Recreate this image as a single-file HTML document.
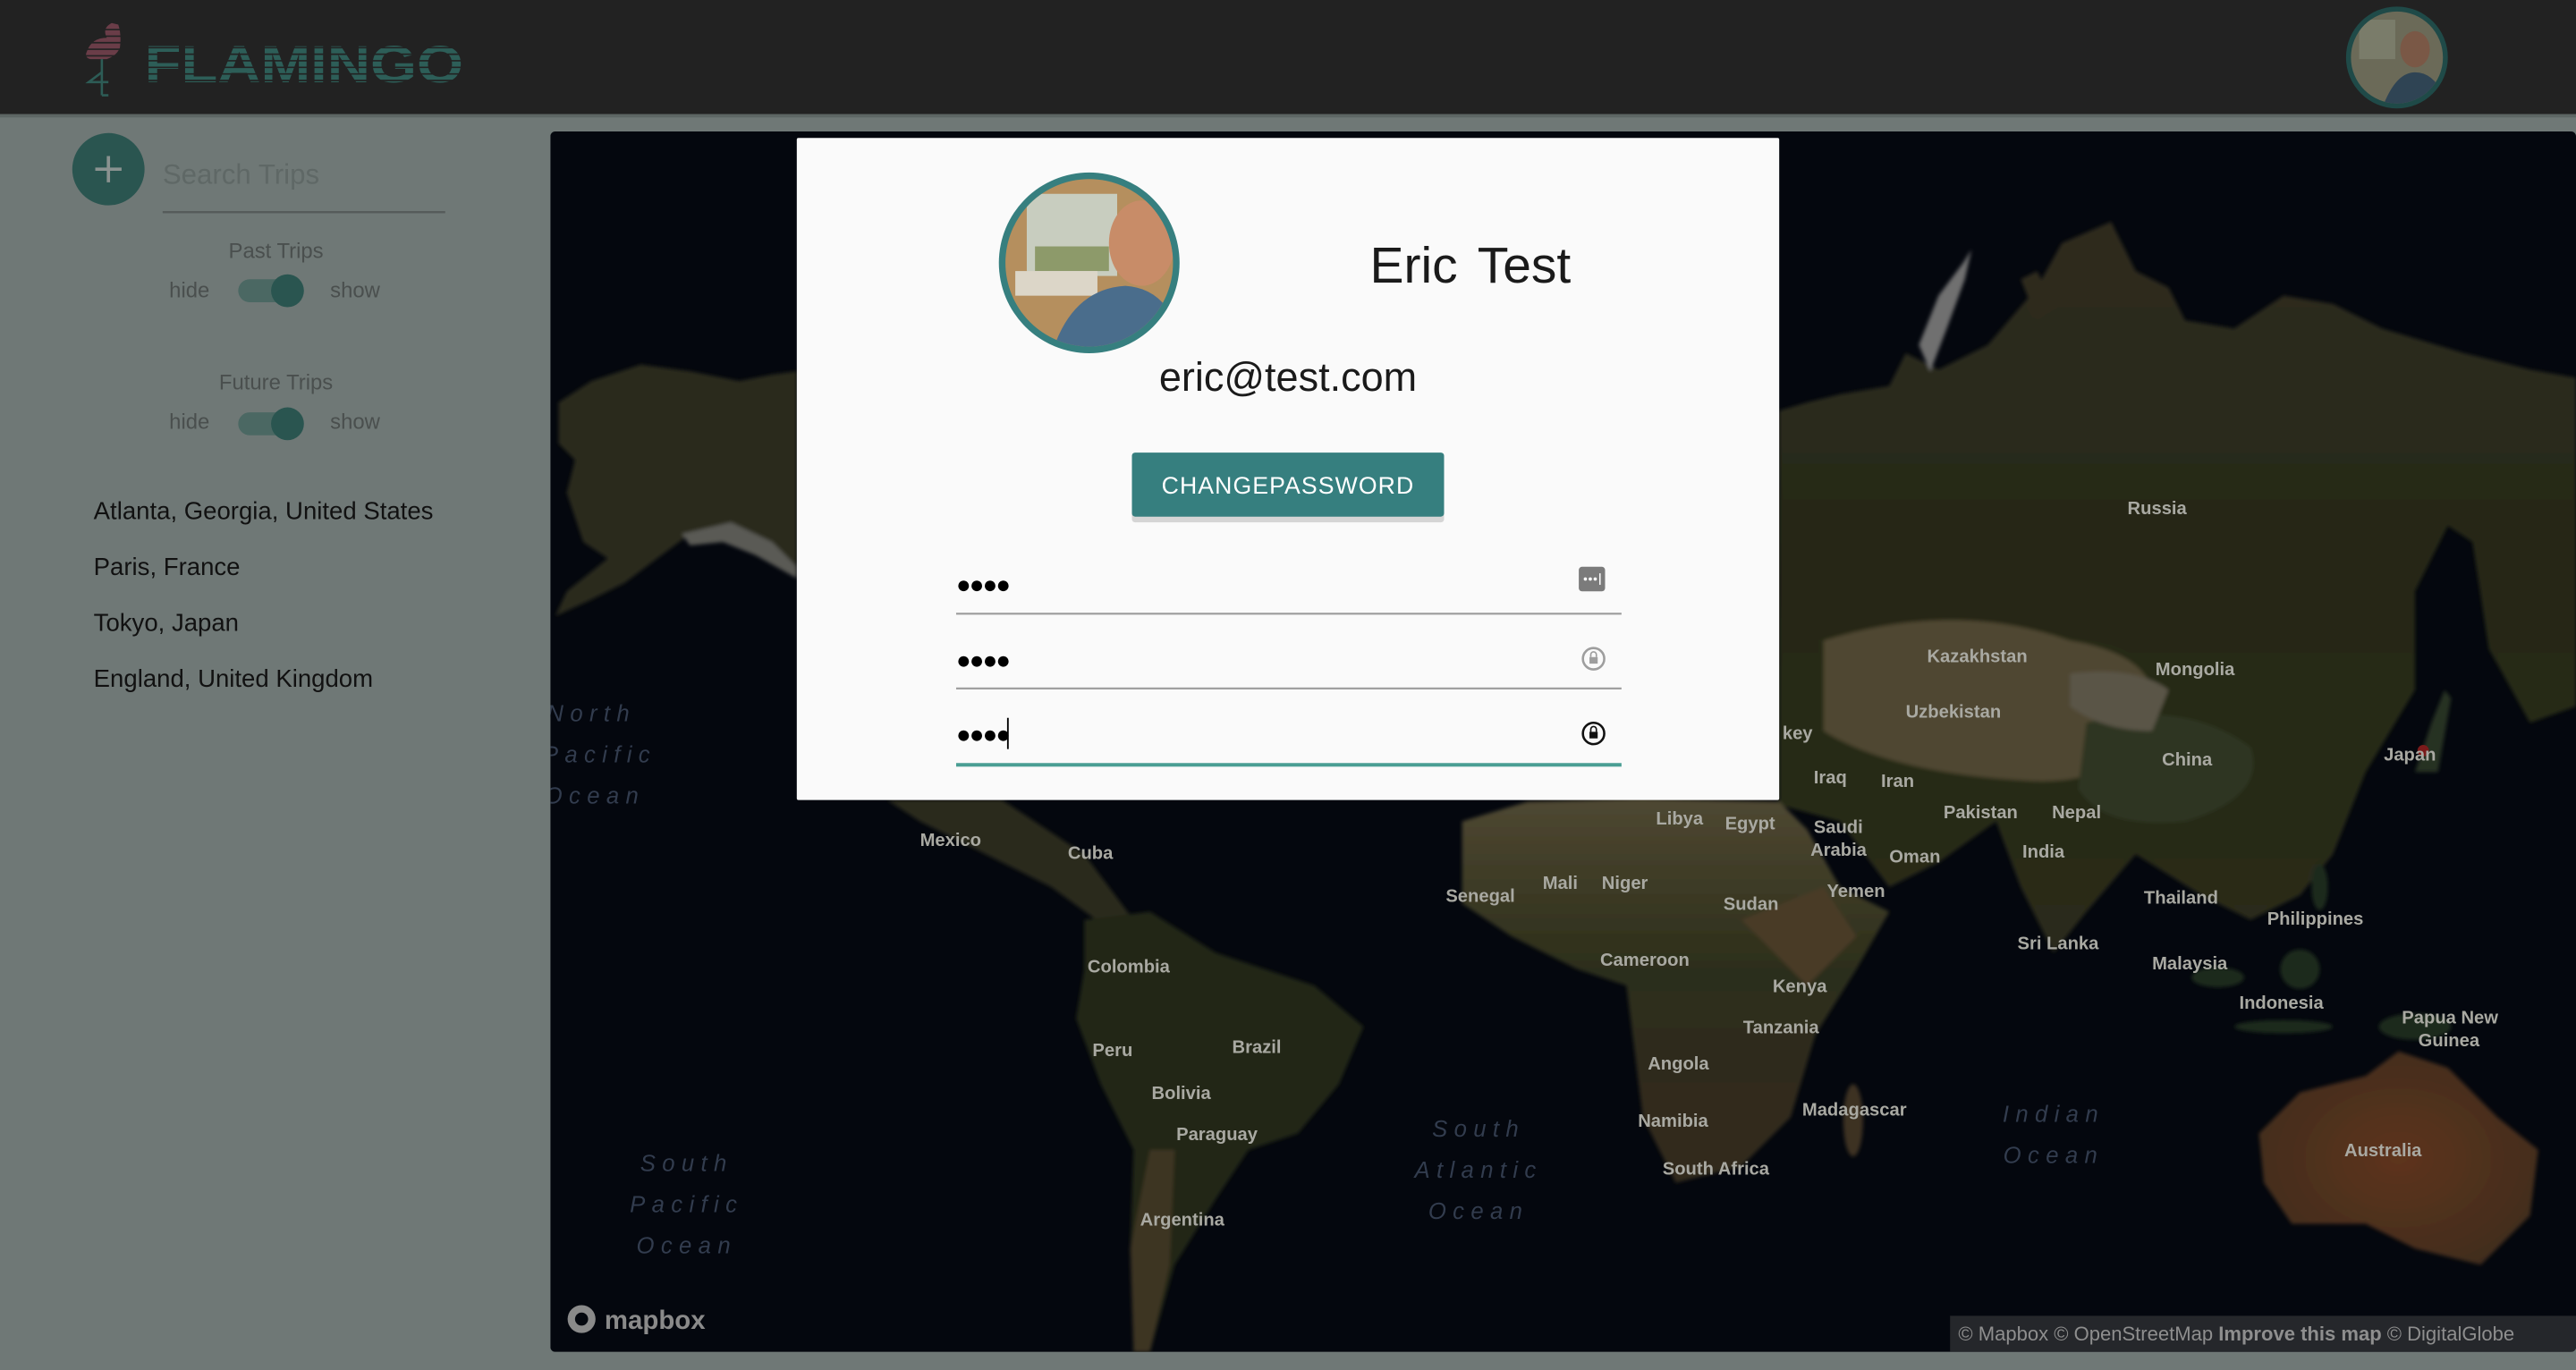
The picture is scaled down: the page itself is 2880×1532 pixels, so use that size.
<!DOCTYPE html>
<html><head><meta charset="utf-8"><style>
html,body{margin:0;padding:0;background:#6f7876;overflow:hidden}
svg{display:block}
text{font-family:"Liberation Sans",Arial,sans-serif}
</style></head><body>
<svg width="2880" height="1532" viewBox="0 0 1568 834" preserveAspectRatio="none" xmlns="http://www.w3.org/2000/svg">
<defs>
<clipPath id="mapc"><rect x="335" y="80" width="1233" height="743" rx="3"/></clipPath>
<clipPath id="av1"><circle cx="663" cy="160" r="51"/></clipPath>
<clipPath id="av2"><circle cx="1459" cy="35" r="28"/></clipPath>
<linearGradient id="asia" x1="0" y1="0" x2="0" y2="1"><stop offset="0" stop-color="#2f2b1d"/><stop offset=".5" stop-color="#252818"/><stop offset="1" stop-color="#2a2c1a"/></linearGradient>
<linearGradient id="afr" x1="0" y1="0" x2="0" y2="1"><stop offset="0" stop-color="#4f4832"/><stop offset=".45" stop-color="#2c2e1a"/><stop offset="1" stop-color="#33291a"/></linearGradient>
<radialGradient id="aus" cx=".5" cy=".5" r=".6"><stop offset="0" stop-color="#5e341a"/><stop offset="1" stop-color="#3f2c1a"/></radialGradient>
<filter id="bl"><feGaussianBlur stdDeviation="1.2"/></filter>
</defs>
<rect width="1568" height="834" fill="#6f7876"/>
<!-- header -->
<rect width="1568" height="69.5" fill="#222"/>
<rect y="69.5" width="1568" height="2" fill="#5d6664"/>
<!-- logo -->
<g>
<path d="M68 14 q-6 3 -3 9 q-9 0 -12 8 q-2 4 2 5 l10 0 q6 -2 8 -7 q1 -8 -1 -14 z" fill="#6a3d48"/>
<path d="M62 36 v22 M62 58 h4 M62 44 l-8 6 h12" stroke="#2d5c56" stroke-width="1.4" fill="none"/>
<text x="88" y="50" font-size="32" font-weight="bold" fill="#2d5e58" textLength="194" lengthAdjust="spacingAndGlyphs">FLAMINGO</text>
<g stroke="#222" stroke-width="0.9">
<line x1="85" y1="21" x2="285" y2="21"/><line x1="85" y1="25" x2="285" y2="25"/><line x1="85" y1="29" x2="285" y2="29"/><line x1="85" y1="33" x2="285" y2="33"/><line x1="85" y1="37" x2="285" y2="37"/><line x1="85" y1="41" x2="285" y2="41"/><line x1="85" y1="45" x2="285" y2="45"/><line x1="85" y1="49" x2="285" y2="49"/>
<line x1="52" y1="18" x2="75" y2="18"/><line x1="52" y1="22" x2="75" y2="22"/><line x1="52" y1="26" x2="75" y2="26"/><line x1="52" y1="30" x2="75" y2="30"/><line x1="52" y1="34" x2="75" y2="34"/>
</g>
</g>
<!-- header avatar -->
<circle cx="1459" cy="35" r="31" fill="#1f4a48"/>
<g clip-path="url(#av2)">
<rect x="1430" y="6" width="60" height="60" fill="#6b6a58"/>
<rect x="1436" y="12" width="22" height="24" fill="#7a7c6a"/>
<ellipse cx="1470" cy="30" rx="9" ry="11" fill="#7a5846"/>
<path d="M1450 66 q8 -22 20 -22 q14 0 20 22 z" fill="#2f4454"/>
</g>
<!-- sidebar -->
<circle cx="66" cy="103" r="22" fill="#2a5550"/>
<path d="M66 95 v16 M58 103 h16" stroke="#8a9290" stroke-width="2"/>
<text x="99" y="112" font-size="17" fill="#5f6866">Search Trips</text>
<rect x="99" y="128.5" width="172" height="1.3" fill="#555b5a"/>
<text x="168" y="157" font-size="13" fill="#4a4f4e" text-anchor="middle">Past Trips</text>
<text x="103" y="181" font-size="13" fill="#4a4f4e">hide</text>
<text x="201" y="181" font-size="13" fill="#4a4f4e">show</text>
<rect x="145" y="170" width="37" height="14" rx="7" fill="#4b6863"/>
<circle cx="175" cy="177" r="10" fill="#2a5550"/>
<text x="168" y="237" font-size="13" fill="#4a4f4e" text-anchor="middle">Future Trips</text>
<text x="103" y="261" font-size="13" fill="#4a4f4e">hide</text>
<text x="201" y="261" font-size="13" fill="#4a4f4e">show</text>
<rect x="145" y="251" width="37" height="14" rx="7" fill="#4b6863"/>
<circle cx="175" cy="258" r="10" fill="#2a5550"/>
<g font-size="15" fill="#111">
<text x="57" y="316">Atlanta, Georgia, United States</text>
<text x="57" y="350">Paris, France</text>
<text x="57" y="384">Tokyo, Japan</text>
<text x="57" y="418">England, United Kingdom</text>
</g>
<!-- map -->
<g clip-path="url(#mapc)">
<rect x="335" y="80" width="1233" height="743" fill="#04070e"/>
<g filter="url(#bl)">
<!-- Alaska -->
<path d="M340 245 L360 232 L390 222 L420 226 L450 232 L470 228 L485 226 L485 350 L470 340 L455 330 L440 320 L420 325 L400 340 L380 355 L360 365 L338 375 L345 360 L370 340 L355 330 L345 300 L350 280 L340 270 Z" fill="#2a2a1c"/>
<path d="M415 325 L445 318 L470 330 L485 345 L485 352 L460 338 L440 330 L420 332 Z" fill="#5a5a55"/>
<!-- Eurasia -->
<path d="M1083 250 L1100 245 L1120 240 L1150 235 L1160 215 L1180 225 L1210 210 L1240 175 L1255 148 L1285 135 L1300 165 L1320 175 L1330 195 L1360 200 L1390 180 L1420 185 L1450 200 L1500 215 L1540 225 L1568 230 L1568 430 L1540 440 L1515 395 L1505 330 L1490 320 L1470 360 L1470 420 L1440 470 L1420 520 L1400 545 L1370 560 L1340 545 L1300 520 L1270 555 L1250 580 L1230 540 L1215 500 L1180 525 L1150 540 L1120 500 L1083 490 Z" fill="url(#asia)"/>
<path d="M1175 226 L1168 210 L1180 180 L1195 160 L1200 152 L1196 170 L1185 200 Z" fill="#6f6f70"/>
<path d="M1230 170 L1240 165 L1250 185 L1240 195 Z" fill="#2e2a1e"/>
<path d="M1110 390 q80 -25 150 0 q60 10 50 50 q-20 40 -80 35 q-80 -5 -120 -30 z" fill="#4f4632"/>
<path d="M1270 440 q60 -15 100 15 q10 30 -40 45 q-50 5 -65 -20 z" fill="#2f3522"/>
<path d="M1260 410 q40 -5 60 10 l-10 25 q-30 0 -50 -15 z" fill="#5a5546"/>
<!-- Africa -->
<path d="M890 500 L930 488 L1000 486 L1083 488 L1100 505 L1120 540 L1150 555 L1130 590 L1105 630 L1090 680 L1060 710 L1020 720 L1000 680 L995 640 L990 600 L960 590 L920 570 L890 550 Z" fill="url(#afr)"/>
<path d="M1060 560 L1110 540 L1130 570 L1100 600 Z" fill="#4a3a26"/>
<!-- Americas -->
<path d="M540 487 L610 487 L660 520 L690 560 L670 562 L640 540 L600 520 L560 500 Z" fill="#2c2a1b"/>
<path d="M660 560 L700 555 L740 580 L800 600 L830 625 L815 660 L790 690 L760 700 L740 730 L715 770 L700 823 L690 823 L688 760 L690 700 L670 660 L655 620 L660 590 Z" fill="#232819"/>
<path d="M700 700 L715 700 L712 770 L700 823 L690 823 L688 760 Z" fill="#3e3422"/>
<path d="M1375 690 L1400 665 L1440 655 L1460 640 L1490 650 L1520 680 L1545 700 L1540 740 L1510 770 L1470 760 L1440 745 L1395 745 L1378 720 Z" fill="url(#aus)"/>
<ellipse cx="1128" cy="682" rx="6" ry="22" fill="#3e3220"/>
<ellipse cx="1350" cy="595" rx="16" ry="6" fill="#1f2a1a"/>
<ellipse cx="1390" cy="625" rx="30" ry="4" fill="#1f2a1a"/>
<ellipse cx="1400" cy="590" rx="12" ry="12" fill="#1f2a1a"/>
<ellipse cx="1470" cy="625" rx="22" ry="8" fill="#1f2a1a"/>
<ellipse cx="1412" cy="540" rx="5" ry="14" fill="#1f2a1a"/>
<path d="M1470 470 L1480 440 L1488 420 L1492 425 L1484 470 Z" fill="#283220"/>
</g>
<circle cx="1475" cy="457" r="3.5" fill="#7a1a1a"/>
<g font-size="11" fill="#a9a9a2" font-weight="bold">
<text x="1295" y="313">Russia</text><text x="1173" y="403">Kazakhstan</text><text x="1312" y="411">Mongolia</text>
<text x="1160" y="437">Uzbekistan</text><text x="1316" y="466">China</text><text x="1451" y="463">Japan</text>
<text x="1085" y="450">key</text><text x="1104" y="477">Iraq</text><text x="1145" y="479">Iran</text>
<text x="1183" y="498">Pakistan</text><text x="1249" y="498">Nepal</text><text x="1231" y="522">India</text>
<text x="1008" y="502">Libya</text><text x="1050" y="505">Egypt</text><text x="1104" y="507">Saudi</text><text x="1102" y="521">Arabia</text>
<text x="1150" y="525">Oman</text><text x="1112" y="546">Yemen</text><text x="1049" y="554">Sudan</text>
<text x="880" y="549">Senegal</text><text x="939" y="541">Mali</text><text x="975" y="541">Niger</text>
<text x="1305" y="550">Thailand</text><text x="1380" y="563">Philippines</text><text x="1228" y="578">Sri Lanka</text>
<text x="1310" y="590">Malaysia</text><text x="1363" y="614">Indonesia</text><text x="1462" y="623">Papua New</text><text x="1472" y="637">Guinea</text>
<text x="974" y="588">Cameroon</text><text x="1079" y="604">Kenya</text><text x="1061" y="629">Tanzania</text>
<text x="1003" y="651">Angola</text><text x="1097" y="679">Madagascar</text><text x="997" y="686">Namibia</text>
<text x="1012" y="715">South Africa</text><text x="1427" y="704">Australia</text>
<text x="560" y="515">Mexico</text><text x="650" y="523">Cuba</text><text x="662" y="592">Colombia</text>
<text x="665" y="643">Peru</text><text x="750" y="641">Brazil</text><text x="701" y="669">Bolivia</text>
<text x="716" y="694">Paraguay</text><text x="694" y="746">Argentina</text>
</g>
<g font-size="14" fill="#323c4e" font-style="italic" letter-spacing="4" text-anchor="middle">
<text x="360" y="439">North</text><text x="365" y="464">Pacific</text><text x="362" y="489">Ocean</text>
<text x="418" y="713">South</text><text x="418" y="738">Pacific</text><text x="418" y="763">Ocean</text>
<text x="900" y="692">South</text><text x="900" y="717">Atlantic</text><text x="900" y="742">Ocean</text>
<text x="1250" y="683">Indian</text><text x="1250" y="708">Ocean</text>
</g>
<circle cx="354" cy="803" r="8.5" fill="#8a8a8a"/><circle cx="354" cy="803" r="4" fill="#05080f"/>
<text x="368" y="809" font-size="16" fill="#8a8a8a" font-weight="bold">mapbox</text>
<rect x="1187" y="801" width="381" height="22" fill="#25272b"/>
<text x="1192" y="816" font-size="12" fill="#8e8e8e">© Mapbox © OpenStreetMap <tspan font-weight="bold">Improve this map</tspan> © DigitalGlobe</text>
</g>
<!-- modal -->
<rect x="485" y="84" width="598" height="403" fill="#fafafa" rx="1"/>
<circle cx="663" cy="160" r="55" fill="#367f7f"/>
<g clip-path="url(#av1)">
<rect x="610" y="108" width="106" height="106" fill="#b58f5e"/>
<rect x="625" y="118" width="55" height="50" fill="#c8cdbf"/>
<rect x="630" y="150" width="45" height="15" fill="#8d9a6a"/>
<rect x="618" y="165" width="50" height="15" fill="#dcd6c8"/>
<ellipse cx="695" cy="148" rx="20" ry="26" fill="#c88c68"/>
<path d="M640 216 q12 -40 45 -42 q30 2 35 42 z" fill="#4a6d8c"/>
</g>
<text x="895" y="172" font-size="31" fill="#1a1a1a" text-anchor="middle" word-spacing="4">Eric Test</text>
<text x="784" y="238" font-size="24.5" fill="#1a1a1a" text-anchor="middle">eric@test.com</text>
<rect x="689" y="276" width="190" height="40" rx="2" fill="#2a2a2a" opacity=".18" transform="translate(0,2)"/>
<rect x="689" y="275.5" width="190" height="39" rx="2" fill="#367f7f"/>
<text x="784" y="300.5" font-size="14.5" fill="#fff" text-anchor="middle" letter-spacing=".6">CHANGEPASSWORD</text>
<g font-size="15" fill="#000">
<text x="582" y="361" font-weight="bold" letter-spacing="-1">●●●●</text>
<text x="582" y="407" font-weight="bold" letter-spacing="-1">●●●●</text>
<text x="582" y="452" font-weight="bold" letter-spacing="-1">●●●●</text>
</g>
<rect x="613" y="437" width="1" height="19" fill="#000"/>
<rect x="582" y="373" width="405" height="1.2" fill="#9e9e9e"/>
<rect x="582" y="418.5" width="405" height="1.2" fill="#9e9e9e"/>
<rect x="582" y="464.5" width="405" height="2.2" fill="#4a9e94"/>
<rect x="961" y="345" width="16" height="15" rx="2" fill="#7b7b7b"/>
<circle cx="965" cy="352.5" r="1" fill="#fff"/><circle cx="968" cy="352.5" r="1" fill="#fff"/><circle cx="971" cy="352.5" r="1" fill="#fff"/><rect x="973.5" y="349" width=".8" height="7" fill="#fff"/>
<circle cx="970" cy="401" r="6.5" fill="none" stroke="#9e9e9e" stroke-width="1.4"/>
<rect x="967.5" y="400" width="5" height="4" fill="#9e9e9e"/><path d="M968.3 400 v-1.5 a1.7 1.7 0 0 1 3.4 0 v1.5" stroke="#9e9e9e" fill="none" stroke-width=".9"/>
<circle cx="970" cy="446.5" r="6.5" fill="none" stroke="#111" stroke-width="1.4"/>
<rect x="967.5" y="445.5" width="5" height="4" fill="#111"/><path d="M968.3 445.5 v-1.5 a1.7 1.7 0 0 1 3.4 0 v1.5" stroke="#111" fill="none" stroke-width=".9"/>
</svg>
</body></html>
